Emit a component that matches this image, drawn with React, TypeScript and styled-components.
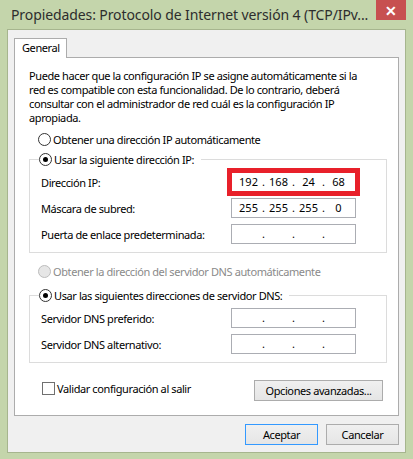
import * as React from 'react';
import styled, { createGlobalStyle } from 'styled-components';

const GlobalStyle = createGlobalStyle`
  html, body {
    margin: 0;
    padding: 0;
    background: #c4d5ab;
  }
  * {
    box-sizing: border-box;
  }
`;

const UIWindow = styled.div`
  width: 413px;
  height: 459px;
  display: flex;
  flex-direction: column;
  background: #c4d5ab;
  font-family: 'Noto Sans', 'Open Sans', sans-serif;
  font-size: 11px;
  letter-spacing: -0.4px;
  color: #000;
  overflow: hidden;
`;

const TitleBar = styled.div`
  height: 29px;
  flex: none;
  display: flex;
  align-items: flex-start;
  justify-content: space-between;
  padding: 0 7px 0 11px;
`;

const Title = styled.div`
  font-size: 14px;
  letter-spacing: -0.1px;
  line-height: 29px;
  color: #2d2d2d;
  white-space: nowrap;
`;

const CloseButton = styled.div`
  width: 30px;
  height: 20px;
  background: #c75050;
  color: #fff;
  display: flex;
  align-items: center;
  justify-content: center;
  font-size: 14px;
  font-weight: 700;
  letter-spacing: 0;
`;

const Client = styled.div`
  flex: 1;
  margin: 0 7px 6px 7px;
  border: 1px solid #a6b58e;
  background: #f0f0f0;
  display: flex;
  flex-direction: column;
  padding: 8px 6px 7px 6px;
`;

const TabStrip = styled.div`
  display: flex;
  height: 19px;
  position: relative;
  z-index: 1;
`;

const Tab = styled.div`
  width: 53px;
  height: 20px;
  padding-left: 7px;
  background: #fff;
  border: 1px solid #acacac;
  border-bottom: none;
  line-height: 18px;
`;

const Panel = styled.div`
  flex: 1;
  background: #fff;
  border: 1px solid #acacac;
  padding: 11px 11px 0 14px;
  display: flex;
  flex-direction: column;
`;

const Intro = styled.p`
  margin: 0 0 7px 0;
  line-height: 14px;
  white-space: nowrap;
`;

const ChoiceRow = styled.label<{ $disabled?: boolean }>`
  display: flex;
  align-items: center;
  gap: 2px;
  height: 15px;
  line-height: 15px;
  padding-left: 9px;
  color: ${(p) => (p.$disabled ? '#8a8a8a' : '#000')};
`;

const RadioDot = styled.span<{ $checked?: boolean; $disabled?: boolean }>`
  width: 13px;
  height: 13px;
  border-radius: 50%;
  border: 1px solid ${(p) => (p.$disabled ? '#bcbcbc' : '#333')};
  background: ${(p) => (p.$disabled ? '#e6e6e6' : '#fff')};
  display: flex;
  align-items: center;
  justify-content: center;
  flex: none;
  &::after {
    content: '';
    display: ${(p) => (p.$checked ? 'block' : 'none')};
    width: 5px;
    height: 5px;
    border-radius: 50%;
    background: #000;
  }
`;

const Group = styled.fieldset`
  margin: 0;
  min-width: 0;
  border: 1px solid #dcdcdc;
  padding: 5px 11px 8px 11px;
  width: 358px;
`;

const Legend = styled.legend`
  padding: 0 7px 0 0;
  margin-left: -2px;
  ${ChoiceRow} {
    padding-left: 0;
  }
`;

const FieldRow = styled.div`
  display: grid;
  grid-template-columns: 190px 125px;
  align-items: center;
  height: 20px;
  & + & {
    margin-top: 6px;
  }
`;

const IpBox = styled.div<{ $marked?: boolean }>`
  height: 20px;
  border: 1px solid #abadb3;
  background: #fff;
  display: flex;
  align-items: center;
  padding-left: 3px;
  line-height: 18px;
  letter-spacing: 0;
  outline: ${(p) => (p.$marked ? '5px solid #e8202a' : 'none')};
  outline-offset: -1px;
`;

const Octet = styled.span`
  width: 27px;
  text-align: center;
`;

const Dot = styled.span`
  width: 3px;
  text-align: center;
`;

const Spacer = styled.div<{ $h: number }>`
  height: ${(p) => p.$h}px;
  flex: none;
`;

const BottomRow = styled.div`
  display: flex;
  justify-content: space-between;
  align-items: flex-start;
  padding: 0 4px 0 13px;
`;

const CheckRow = styled.label`
  display: flex;
  align-items: center;
  gap: 2px;
  margin-top: 1px;
  line-height: 15px;
`;

const CheckBox = styled.span`
  width: 13px;
  height: 13px;
  border: 1px solid #707070;
  background: #fff;
`;

const Button = styled.div<{ $width: number; $default?: boolean }>`
  width: ${(p) => p.$width}px;
  height: 21px;
  border: 1px solid ${(p) => (p.$default ? '#3399ff' : '#acacac')};
  background: linear-gradient(#f0f0f0, #e5e5e5);
  display: flex;
  align-items: center;
  justify-content: center;
  line-height: 15px;
`;

const Footer = styled.div`
  display: flex;
  justify-content: flex-end;
  gap: 8px;
  margin-top: 8px;
`;

function Choice(props: { label: string; checked?: boolean; disabled?: boolean }) {
  return (
    <ChoiceRow $disabled={props.disabled}>
      <RadioDot $checked={props.checked} $disabled={props.disabled} />
      {props.label}
    </ChoiceRow>
  );
}

function IpField(props: { value?: string[]; marked?: boolean }) {
  const parts = props.value ?? ['', '', '', ''];
  return (
    <IpBox $marked={props.marked}>
      {parts.map((v, i) => (
        <React.Fragment key={i}>
          {i > 0 && <Dot>.</Dot>}
          <Octet>{v}</Octet>
        </React.Fragment>
      ))}
    </IpBox>
  );
}

export default function App() {
  return (
    <>
      <GlobalStyle />
      <UIWindow>
        <TitleBar>
          <Title>Propiedades: Protocolo de Internet versión 4 (TCP/IPv...</Title>
          <CloseButton>✕</CloseButton>
        </TitleBar>
        <Client>
          <TabStrip>
            <Tab>General</Tab>
          </TabStrip>
          <Panel>
            <Intro>
              Puede hacer que la configuración IP se asigne automáticamente si la
              <br />
              red es compatible con esta funcionalidad. De lo contrario, deberá
              <br />
              consultar con el administrador de red cuál es la configuración IP
              <br />
              apropiada.
            </Intro>
            <Choice label="Obtener una dirección IP automáticamente" />
            <Spacer $h={5} />
            <Group>
              <Legend>
                <Choice label="Usar la siguiente dirección IP:" checked />
              </Legend>
              <FieldRow>
                <span>Dirección IP:</span>
                <IpField value={['192', '168', '24', '68']} marked />
              </FieldRow>
              <FieldRow>
                <span>Máscara de subred:</span>
                <IpField value={['255', '255', '255', '0']} />
              </FieldRow>
              <FieldRow>
                <span>Puerta de enlace predeterminada:</span>
                <IpField />
              </FieldRow>
            </Group>
            <Spacer $h={11} />
            <Choice label="Obtener la dirección del servidor DNS automáticamente" disabled />
            <Spacer $h={9} />
            <Group>
              <Legend>
                <Choice label="Usar las siguientes direcciones de servidor DNS:" checked />
              </Legend>
              <FieldRow>
                <span>Servidor DNS preferido:</span>
                <IpField />
              </FieldRow>
              <FieldRow>
                <span>Servidor DNS alternativo:</span>
                <IpField />
              </FieldRow>
            </Group>
            <Spacer $h={17} />
            <BottomRow>
              <CheckRow>
                <CheckBox />
                Validar configuración al salir
              </CheckRow>
              <Button $width={129}>Opciones avanzadas...</Button>
            </BottomRow>
          </Panel>
          <Footer>
            <Button $width={73} $default>
              Aceptar
            </Button>
            <Button $width={73}>Cancelar</Button>
          </Footer>
        </Client>
      </UIWindow>
    </>
  );
}
